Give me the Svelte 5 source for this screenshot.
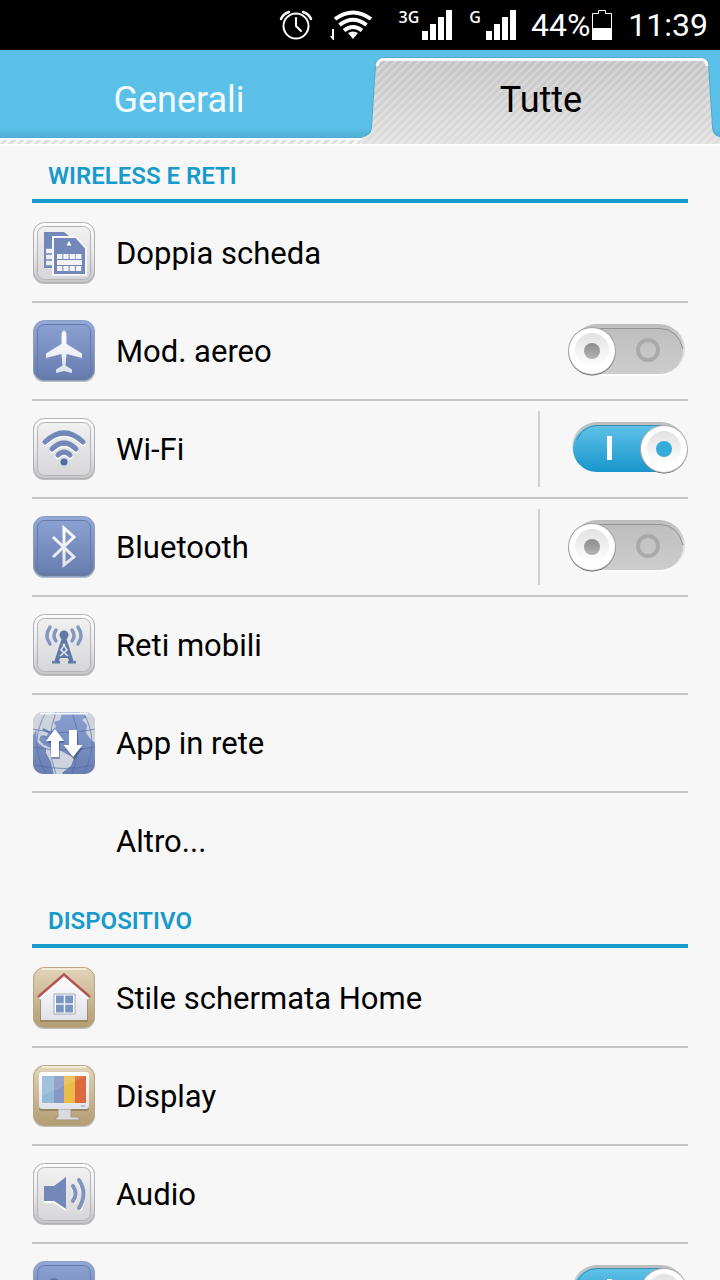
<script>
  const ink = '#7388b9';
  const sections = [
    {
      title: 'WIRELESS E RETI',
      rows: [
        { id: 'sim', label: 'Doppia scheda', tone: 'light' },
        { id: 'plane', label: 'Mod. aereo', tone: 'blue', toggle: true, on: false },
        { id: 'wifi', label: 'Wi-Fi', tone: 'light', toggle: true, on: true, split: true },
        { id: 'bluetooth', label: 'Bluetooth', tone: 'blue', toggle: true, on: false, split: true },
        { id: 'mobile', label: 'Reti mobili', tone: 'light' },
        { id: 'globe', label: 'App in rete', tone: 'globe' },
        { id: 'more', label: 'Altro...' }
      ]
    },
    {
      title: 'DISPOSITIVO',
      rows: [
        { id: 'home', label: 'Stile schermata Home', tone: 'tan' },
        { id: 'display', label: 'Display', tone: 'tan' },
        { id: 'audio', label: 'Audio', tone: 'light' },
        { id: 'quiet', label: '', tone: 'blue', toggle: true, on: true }
      ]
    }
  ];
  let state = $state(
    Object.fromEntries(sections.flatMap((s) => s.rows).filter((r) => r.toggle).map((r) => [r.id, r.on]))
  );
</script>

<svg class="defs" width="0" height="0" aria-hidden="true">
  <defs>
    <linearGradient id="light" x2="0" y2="1"><stop stop-color="#fdfdfd" /><stop offset=".5" stop-color="#e9e9eb" /><stop offset="1" stop-color="#c6c6c8" /></linearGradient>
    <linearGradient id="lightIn" x2="0" y2="1"><stop stop-color="#f1f1f2" /><stop offset="1" stop-color="#d6d6d8" /></linearGradient>
    <linearGradient id="blue" x2="0" y2="1"><stop stop-color="#93aad8" /><stop offset="1" stop-color="#66799f" /></linearGradient>
    <linearGradient id="blueIn" x2="0" y2="1"><stop stop-color="#8aa1d2" /><stop offset="1" stop-color="#687db0" /></linearGradient>
    <linearGradient id="tan" x2="0" y2="1"><stop stop-color="#e3d5bb" /><stop offset="1" stop-color="#b29c72" /></linearGradient>
    <linearGradient id="white" x2="0" y2="1"><stop stop-color="#ffffff" /><stop offset="1" stop-color="#dfe2ea" /></linearGradient>
    <linearGradient id="off" x2="0" y2="1"><stop stop-color="#bebebe" /><stop offset="1" stop-color="#cdcdcd" /></linearGradient>
    <linearGradient id="on" x2="0" y2="1"><stop stop-color="#60c2e8" /><stop offset="1" stop-color="#1796cb" /></linearGradient>
    <linearGradient id="rim" x2="0" y2="1"><stop stop-color="#bcbcbc" /><stop offset="1" stop-color="#ffffff" /></linearGradient>
    <linearGradient id="knob" x2="0" y2="1"><stop stop-color="#e2e2e2" /><stop offset="1" stop-color="#ffffff" /></linearGradient>
    <linearGradient id="dot" x2="0" y2="1"><stop stop-color="#8c8c8c" /><stop offset="1" stop-color="#b4b4b4" /></linearGradient>
    <clipPath id="tile"><rect x="1" y="1" width="62" height="62" rx="10" /></clipPath>
  </defs>
</svg>

<div class="screen">
  <header class="status">
    <svg width="34" height="34" viewBox="0 0 34 34" fill="none" stroke="#fff" stroke-width="2" stroke-linecap="round">
      <circle cx="17" cy="18" r="12.500" /><path d="M17 10v8l5 5" /><path d="M2 11Q4 6 10 4M24 4Q30 6 32 11" stroke-width="2.500" />
    </svg>
    <svg class="wifi" width="44" height="32" viewBox="0 0 44 32">
      <path fill="#fff" d="M24 30l-5-6q5-3 10 0z" />
      <g fill="none" stroke="#fff" stroke-width="4"><path d="M6 10Q24-3 42 10" /><path d="M10.500 16Q24 5.500 37.500 16" /><path d="M15 21.500Q24 14.500 33 21.500" /></g>
      <path fill="#fff" d="M3 20h2v11H4l-3-4h2z" />
    </svg>
    <span class="net first">3G</span>
    <svg width="30" height="30" viewBox="0 0 30 30" fill="#fff"><path d="M0 21h6v9H0zM8 14h6v16H8zM16 7h6v23h-6zM24 0h6v30h-6z" /></svg>
    <span class="net second">G</span>
    <svg width="30" height="30" viewBox="0 0 30 30" fill="#fff"><path d="M0 21h6v9H0zM8 14h6v16H8zM16 7h6v23h-6zM24 0h6v30h-6z" /></svg>
    <span class="percent">44%</span>
    <svg class="battery" width="20" height="30" viewBox="0 0 20 30"><path d="M.5 29.500v-26h6v-3h7v3h6v26z" fill="none" stroke="#fff" /><path d="M0 18h20v12H0z" fill="#fff" /></svg>
    <time>11:39</time>
  </header>

  <div class="tabs" role="tablist">
    <button class="tab" role="tab" aria-selected="false">Generali</button>
    <button class="tab" role="tab" aria-selected="true">
      <svg class="shape" viewBox="0 0 360 90" preserveAspectRatio="none" aria-hidden="true">
        <defs>
          <linearGradient id="tabFill" x2="0" y2="1"><stop stop-color="#c2c2c2" /><stop offset="1" stop-color="#dedede" /></linearGradient>
          <pattern id="hatch" width="8" height="8" patternUnits="userSpaceOnUse"><path d="M-2 2l4-4M-2 10L10-2M6 10l4-4" stroke="#fff" stroke-opacity=".28" stroke-width="2.500" /></pattern>
        </defs>
        <path d="M0 83Q9 82 10 74L14 11Q15 3 22 3H340Q348 3 348 11L352 74Q353 82 360 83V90H0z" fill="none" stroke="#459dbf" stroke-width="2" opacity=".6" />
        <path d="M0 83Q9 82 10 74L14 11Q15 3 22 3H340Q348 3 348 11L352 74Q353 82 360 83V90H0z" fill="url(#tabFill)" />
        <path d="M0 83Q9 82 10 74L14 11Q15 3 22 3H340Q348 3 348 11L352 74Q353 82 360 83V90H0z" fill="url(#hatch)" />
        <path d="M15 11Q16 4.500 22 4.500H340Q347 4.500 347 11" fill="none" stroke="#f8f8f8" stroke-width="3" />
      </svg>
      <span>Tutte</span>
    </button>
  </div>

  <main>
    {#each sections as section}
      <section>
        <h2>{section.title}</h2>
        <ul>
          {#each section.rows as row}
            <li>
              <span class="icon">
                {#if row.tone}
                  <svg width="64" height="64" viewBox="0 0 64 64" aria-hidden="true">
                    <rect x="1" y="2" width="62" height="61" rx="11" fill="#777" opacity=".45" />
                    {#if row.tone === 'light'}
                      <rect x="1.500" y="1.500" width="61" height="60" rx="11" fill="url(#light)" stroke="#b0b0b2" />
                      <rect x="5.500" y="5.500" width="53" height="53" rx="7" fill="url(#lightIn)" stroke="#b3b3b6" />
                    {:else if row.tone === 'blue'}
                      <rect x="1.500" y="1.500" width="61" height="60" rx="11" fill="url(#blue)" stroke="#8b9dc5" />
                      <rect x="5.500" y="5.500" width="53" height="53" rx="7" fill="url(#blueIn)" stroke="#6379ab" />
                    {:else if row.tone === 'tan'}
                      <rect x="1.500" y="1.500" width="61" height="60" rx="11" fill="url(#tan)" stroke="#b8a581" />
                      <path d="M10 3h44" stroke="#f8f0e0" stroke-width="2" opacity=".8" />
                    {/if}

                    {#if row.id === 'sim'}
                      <path d="M12 11h20l5 4H21v32h-9z" fill={ink} />
                      <path d="M14 30h7M14 36h7M14 42h7" stroke="#eee" stroke-width="4.500" />
                      <path d="M21 16h23l10 11v27H21z" fill={ink} stroke="#f5f5f7" stroke-width="2" />
                      <path d="M37 20l2.500 4.500h-5z" fill="#fff" />
                      <path d="M25 35.500h18" stroke="#f3f3f5" stroke-width="5" stroke-dasharray="5.300 1" />
                      <path d="M43.500 33h6v5h-6z" fill="#f3f3f5" />
                      <path d="M25 41.500h25" stroke="#f3f3f5" stroke-width="5" />
                      <path d="M25 47.500h25" stroke="#f3f3f5" stroke-width="5" stroke-dasharray="5.300 1" />
                    {:else if row.id === 'plane'}
                      <path d="M32 11q2.500 2 2.500 6v8L50 34.500v4.500l-15.500-4-1 11.500 6.500 4V54l-8-2-8 2v-3.500l6.500-4-1-11.500L14 39v-4.500L29.500 25v-8q0-4 2.500-6z" fill="url(#white)" />
                    {:else if row.id === 'wifi'}
                      <g fill="none" stroke="#fff" stroke-width="5" stroke-linecap="round" transform="translate(0 1.500)"><path d="M13 25Q32 7 51 25M20 32Q32 20 44 32M26 38Q32 32 38 38" /></g>
                      <g fill="none" stroke={ink} stroke-width="5" stroke-linecap="round"><path d="M13 25Q32 7 51 25M20 32Q32 20 44 32M26 38Q32 32 38 38" /></g>
                      <circle cx="32" cy="45" r="3.500" fill="#4f6aa5" />
                    {:else if row.id === 'bluetooth'}
                      <path d="M21 22L42 42L32 50V13L42 22L21 42" fill="none" stroke="url(#white)" stroke-width="3" />
                    {:else if row.id === 'mobile'}
                      <g fill="none" stroke="#8296be" stroke-width="3.500" stroke-linecap="round"><path d="M24 17q-4 6 0 11M18 14q-6 9 0 17M40 17q4 6 0 11M46 14q6 9 0 17" /></g>
                      <circle cx="32" cy="22" r="4.500" fill="#5f79a9" />
                      <path d="M29.500 26h5l7 22h2.500v2.500h-8v-2.500h1l-1-3h-8l-1 3h1v2.500h-8v-2.500h2.500z" fill="#5f79a9" />
                      <path d="M31 31l4 6-7 6M33 31l-4 6 7 6" fill="none" stroke="#e3e5ea" stroke-width="1.500" />
                    {:else if row.id === 'globe'}
                      <g clip-path="url(#tile)">
                        <path d="M0 0h64v64H0z" fill="url(#blueIn)" />
                        <path d="M0 0H25L8 12 0 26zM46 0H64V18L56 7z" fill="#d1d5de" />
                        <path d="M4 15L15 5 30 2l-2 7-6 2 2 5-7 5-3 5-5-2-2 5 5 5 5 2-4 1-8-6zM14 37l8-2 9 6 11 6-3 8-8 6-1 3h-8l-3-13-5-9zM50 9l8-5 6 5v23l-4-2-6-8 1-8z" fill="#ced4de" />
                        <path d="M11 18l7 4M11 25l6 3" stroke="#6f87b9" stroke-width="2.500" />
                        <g fill="none" stroke="#536ba4" opacity=".65"><path d="M0 18Q32 25 64 18M0 36Q32 42 64 36M3 54Q32 61 61 54M14 1Q-4 32 14 63M24 1Q12 32 24 63M40 1Q52 32 40 63M51 1Q69 32 51 63" /></g>
                        <path d="M8 2.500h48" stroke="#f4f6fa" stroke-width="2" />
                      </g>
                      <path d="M24 20l9 12h-5v16h-8V32h-5zM38 22h8v15h5l-9 12-9-12h5z" fill="#34466e" opacity=".5" />
                      <path d="M23 18l9 12h-5v16h-8V30h-5zM37 19h8v15h5.500l-9.500 12-9.500-12h5.500z" fill="#fff" />
                    {:else if row.id === 'home'}
                      <path d="M8 32L32 11l24 21v24H8z" fill="#78623c" opacity=".4" />
                      <path d="M9 30L32 9l23 21v24H9z" fill="url(#white)" />
                      <path d="M7 32L32 9.500 57 32" fill="none" stroke="#fff" stroke-width="4" />
                      <path d="M6 31L32 8.500 58 31" fill="none" stroke="#b65450" stroke-width="2.500" />
                      <path d="M22 28h21v20H22z" fill="#fff" stroke="#a6a6aa" />
                      <path d="M24 29.500h17v17H24z" fill="#7896c2" />
                      <path d="M32.500 29v18M24 38h17" stroke="#eef1f6" stroke-width="1.500" />
                    {:else if row.id === 'display'}
                      <rect x="7" y="10" width="50" height="37" rx="3" fill="#73603d" opacity=".5" />
                      <path d="M26 45h13v8h8v3H24v-3h2z" fill="#d9dbe0" stroke="#a4967a" />
                      <rect x="7" y="8" width="50" height="37" rx="3" fill="url(#white)" />
                      <path d="M10 12h12v27H10z" fill="#94b9d7" /><path d="M22 12h10v27H22z" fill="#8896c3" /><path d="M32 12h11v27H32z" fill="#ebbc48" /><path d="M43 12h11v27H43z" fill="#dd693d" />
                      <path d="M10 12h44L10 32z" fill="#fff" opacity=".12" />
                      <path d="M49 42h4" stroke="#999" />
                    {:else if row.id === 'audio'}
                      <path d="M12 26h10l12-9v32L22 41H12z" fill="#fff" />
                      <path d="M12 24h10l12-9v32l-12-8H12z" fill={ink} />
                      <path d="M41 24q5 8 0 15M47 18q9 14 0 28" fill="none" stroke="#fff" stroke-width="4" transform="translate(0 2)" />
                      <path d="M41 24q5 8 0 15M47 18q9 14 0 28" fill="none" stroke="#8194bd" stroke-width="4" stroke-linecap="round" />
                    {:else if row.id === 'quiet'}
                      <circle cx="22" cy="24" r="6" fill="#5f76aa" />
                    {/if}
                  </svg>
                {/if}
              </span>
              <span class="label" id="label-{row.id}">{row.label}</span>
              {#if row.toggle}
                <label class="switch" class:split={row.split}>
                  <input
                    type="checkbox"
                    role="switch"
                    bind:checked={state[row.id]}
                    aria-labelledby={row.label ? `label-${row.id}` : undefined}
                    aria-label={row.label ? undefined : 'Attiva'}
                  />
                  <svg width="122" height="56" viewBox="0 1 122 56" aria-hidden="true">
                    {#if state[row.id]}
                      <rect x="4" y="2" width="114" height="50" rx="25" fill="url(#rim)" />
                      <rect x="5" y="5" width="113" height="47" rx="23.500" fill="url(#on)" />
                      <path d="M9 20Q15 6 29 5.500H94" fill="none" stroke="#3c8cac" />
                      <path d="M39 16h5v24h-5z" fill="#fff" />
                      <circle cx="96" cy="30" r="23.500" fill="#555" />
                      <circle cx="96" cy="29" r="24" fill="#b2b2b2" />
                      <circle cx="96" cy="29" r="23" fill="#fff" />
                      <circle cx="96" cy="28" r="17" fill="url(#knob)" />
                      <circle cx="96" cy="29" r="8" fill="#36acd9" />
                    {:else}
                      <rect x="3" y="2" width="114" height="52" rx="26" fill="url(#rim)" />
                      <rect x="3" y="6" width="112" height="46" rx="23" fill="url(#off)" />
                      <path d="M24 6.500H92Q110 7 115 27" fill="none" stroke="#929292" />
                      <circle cx="80" cy="28" r="10" fill="none" stroke="#aaa" stroke-width="4" />
                      <circle cx="24" cy="30" r="23.500" fill="#444" />
                      <circle cx="24" cy="29" r="24" fill="#a5a5a5" />
                      <circle cx="24" cy="29" r="23" fill="#fff" />
                      <circle cx="24" cy="28" r="17" fill="url(#knob)" />
                      <circle cx="24" cy="29" r="8" fill="url(#dot)" />
                    {/if}
                  </svg>
                </label>
              {/if}
            </li>
          {/each}
        </ul>
      </section>
    {/each}
  </main>
</div>

<style>
  :global(body) {
    margin: 0;
    background: #f7f7f7;
  }
  .defs {
    position: absolute;
  }
  .screen {
    display: flex;
    flex-direction: column;
    height: 100vh;
    overflow: hidden;
    font-family: Roboto, "Noto Sans", sans-serif;
    color: #000;
  }
  .screen svg {
    display: block;
    flex: none;
  }
  .status {
    display: flex;
    flex: none;
    align-items: center;
    justify-content: flex-end;
    height: 50px;
    padding-right: 12px;
    background: #000;
    color: #fff;
  }
  .status .wifi {
    margin-left: 16px;
  }
  .net {
    align-self: flex-start;
    margin-top: 8px;
    font: 600 16px/18px "Open Sans", sans-serif;
  }
  .first {
    margin: 8px 3px 0 26px;
  }
  .second {
    margin: 8px 5px 0 17px;
  }
  .percent,
  time {
    margin-left: 16px;
    font-size: 32px;
    line-height: 52px;
  }
  .status .battery {
    margin-left: 2px;
  }
  .percent {
    margin-left: 15px;
  }
  .tabs {
    display: flex;
    flex: none;
    height: 88px;
    padding-bottom: 8px;
    background:
      linear-gradient(#5bc0e7, #5bc0e7 78px, #50add4 88px, #fff 88px, #fff 90px, transparent 90px, transparent 94px, #fff 94px),
      repeating-linear-gradient(135deg, #dedede 0 3px, #f7f7f7 3px 6px);
  }
  .tab {
    box-sizing: border-box;
    position: relative;
    flex: 1;
    padding: 12px 4px 0 0;
    border: 0;
    background: none;
    font: 36px/44px Roboto, sans-serif;
    color: #f2fbff;
  }
  .tab[aria-selected="true"] {
    padding: 12px 0 0;
    color: #000;
  }
  .shape {
    position: absolute;
    inset: 5px 0 auto;
    width: 100%;
    height: 89px;
  }
  .tab span {
    position: relative;
  }
  main {
    flex: 1;
    min-height: 0;
    padding: 0 32px;
    overflow-y: auto;
    scrollbar-width: none;
  }
  h2 {
    height: 53px;
    margin: 0 0 2px;
    padding: 0 16px;
    border-bottom: 4px solid #189bca;
    font-size: 24px;
    font-weight: 600;
    line-height: 60px;
    color: #189bca;
  }
  ul {
    margin: 0;
    padding: 0;
    list-style: none;
  }
  li {
    display: flex;
    align-items: center;
    height: 96px;
    border-bottom: 2px solid #c4c4c4;
  }
  li:last-child {
    border-bottom-color: transparent;
  }
  .icon {
    flex: none;
    width: 64px;
  }
  .label {
    flex: 1;
    padding: 2px 0 0 20px;
    font-size: 31px;
    line-height: 40px;
  }
  .switch {
    position: relative;
    margin-right: -2px;
    padding-left: 28px;
  }
  .switch.split {
    padding: 10px 0 10px 28px;
    border-left: 2px solid #d0d0d0;
  }
  input {
    position: absolute;
    inset: 0;
    width: 100%;
    height: 100%;
    margin: 0;
    opacity: 0;
  }
</style>
